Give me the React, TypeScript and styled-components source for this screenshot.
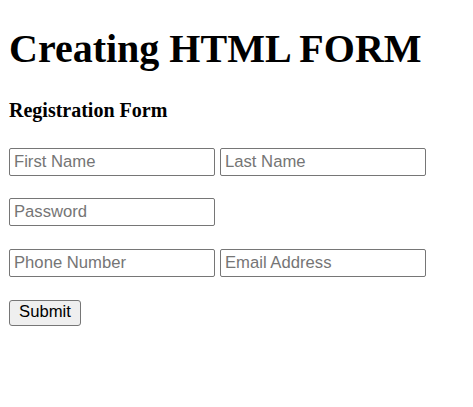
import React from "react";
import styled, { createGlobalStyle } from "styled-components";

const GlobalStyle = createGlobalStyle`
  html, body {
    margin: 0;
    padding: 0;
    background: #ffffff;
  }
  body {
    font-family: "Liberation Serif", "Times New Roman", serif;
    color: #000000;
  }
`;

const Page = styled.div`
  padding: 0 9px;
  display: flow-root;
`;

const Title = styled.h1`
  font-family: "Liberation Serif", "Times New Roman", serif;
  font-size: 40px;
  font-weight: bold;
  line-height: normal;
  margin: 24.8px 0 26.8px;
`;

const Subtitle = styled.h4`
  font-family: "Liberation Serif", "Times New Roman", serif;
  font-size: 20px;
  font-weight: bold;
  line-height: normal;
  margin: 26.6px 0 0;
`;

const Form = styled.form`
  display: flex;
  flex-direction: column;
  align-items: flex-start;
  gap: 22.7px;
  margin-top: 26px;
`;

const Row = styled.div`
  display: flex;
  gap: 5px;
`;

const Field = styled.input`
  box-sizing: border-box;
  width: 206px;
  height: 28px;
  margin: 0;
  padding: 1px 4px;
  border: 1px solid #767676;
  border-radius: 2px;
  background: #ffffff;
  font-family: "Liberation Sans", Arial, sans-serif;
  font-size: 16.67px;
  color: #000000;
  outline: none;

  &::placeholder {
    color: #757575;
    opacity: 1;
  }
`;

const SubmitButton = styled.button`
  box-sizing: border-box;
  width: 72px;
  height: 26px;
  margin: 0;
  padding: 0;
  border: 1px solid #767676;
  border-radius: 3px;
  background: #efefef;
  font-family: "Liberation Sans", Arial, sans-serif;
  font-size: 16.67px;
  color: #000000;
  line-height: 1;
`;

export default function App() {
  return (
    <>
      <GlobalStyle />
      <Page>
        <Title>Creating HTML FORM</Title>
        <Subtitle>Registration Form</Subtitle>
        <Form onSubmit={(e) => e.preventDefault()}>
          <Row>
            <Field type="text" placeholder="First Name" />
            <Field type="text" placeholder="Last Name" />
          </Row>
          <Row>
            <Field type="password" placeholder="Password" />
          </Row>
          <Row>
            <Field type="tel" placeholder="Phone Number" />
            <Field type="email" placeholder="Email Address" />
          </Row>
          <SubmitButton type="submit">Submit</SubmitButton>
        </Form>
      </Page>
    </>
  );
}
